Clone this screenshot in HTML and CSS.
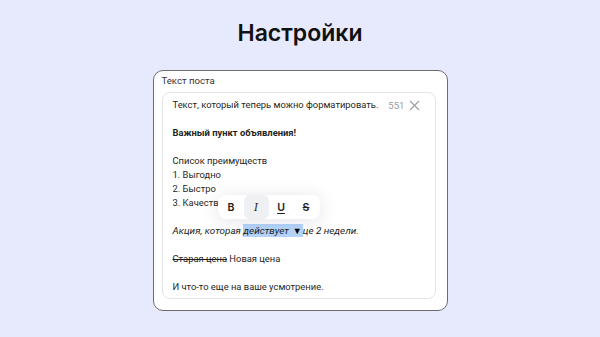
FILE: index.html
```html
<!DOCTYPE html>
<html lang="ru">
<head>
<meta charset="utf-8">
<link rel="stylesheet" href="styles.css">
</head>
<body>
<h1 class="title">Настройки</h1>
<div class="card">
  <div class="label">Текст поста</div>
  <div class="editor">
    <div class="head">
      <span class="line">Текст, который теперь можно форматировать.</span>
      <span class="count">551</span>
      <svg class="close" width="11" height="11" viewBox="0 0 11 11"><path d="M1 1L10 10M10 1L1 10" stroke="#9a9ca3" stroke-width="1.1" fill="none"/></svg>
    </div>
    <div class="gap"></div>
    <div class="line bold">Важный пункт объявления!</div>
    <div class="gap"></div>
    <div class="line">Список преимуществ</div>
    <div class="line">1. Выгодно</div>
    <div class="line">2. Быстро</div>
    <div class="line">3. Качество</div>
    <div class="gap"></div>
    <div class="line italic">Акция, которая <span class="sel">действует<span class="caret">▼</span></span>це 2 недели.</div>
    <div class="gap"></div>
    <div class="line"><s>Старая цена</s> Новая цена</div>
    <div class="gap"></div>
    <div class="line">И что-то еще на ваше усмотрение.</div>
    <div class="toolbar">
      <span class="btn b">B</span>
      <span class="btn i active">I</span>
      <span class="btn u">U</span>
      <span class="btn s">S</span>
    </div>
  </div>
</div>
</body>
</html>
```
FILE: styles.css
```css
html, body {
  margin: 0;
  padding: 0;
}
body {
  background: #e7eafd;
  font-family: Roboto, "Noto Sans", sans-serif;
  color: #1f1f22;
  width: 600px;
  height: 337px;
  overflow: hidden;
}
.title {
  margin: 0;
  padding-top: 18px;
  height: 35px;
  text-align: center;
  font-family: Inter, sans-serif;
  font-size: 23px;
  font-weight: 600;
  line-height: 30px;
  color: #111;
}
.card {
  box-sizing: border-box;
  width: 295px;
  margin: 17px auto 0;
  background: #fff;
  border: 1.5px solid #6d6d70;
  border-radius: 10px;
  padding: 3px 11px 11px 8px;
}
.label {
  font-size: 9.6px;
  line-height: 14px;
  color: #333;
  margin-bottom: 4px;
}
.editor {
  position: relative;
  border: 1px solid #e4e4e8;
  border-radius: 8px;
  padding: 5px 15px 4px 10px;
}
.head {
  display: flex;
  align-items: center;
}
.head .line {
  flex: 1;
}
.count {
  font-size: 9.6px;
  color: #9a9ca3;
  margin-right: 4px;
}
.close {
  display: block;
  flex-shrink: 0;
}
.line {
  font-size: 9.4px;
  line-height: 14px;
  white-space: nowrap;
}
.gap {
  height: 14px;
}
.bold {
  font-weight: 700;
}
.italic {
  font-style: italic;
  font-size: 9.9px;
}
.sel {
  background: #b5d4fb;
  padding: 1px 0;
}
.caret {
  font-style: normal;
  font-size: 9px;
  color: #000;
  margin-left: 4px;
  margin-right: 1px;
}
s {
  text-decoration-thickness: 1px;
}
.toolbar {
  position: absolute;
  left: 55px;
  top: 102px;
  display: flex;
  padding: 0 1px;
  background: #fff;
  border-radius: 8px;
  box-shadow: 0 2px 18px rgba(30, 40, 90, 0.13);
}
.btn {
  width: 25px;
  height: 24px;
  display: flex;
  align-items: center;
  justify-content: center;
  font-family: Inter, sans-serif;
  font-size: 10.5px;
  font-weight: 600;
  color: #222;
  border-radius: 6px;
}
.btn.active {
  background: #eff0f3;
}
.btn.i {
  font-style: italic;
  font-family: "DejaVu Serif", serif;
  font-weight: 400;
}
.btn.u {
  text-decoration: underline;
  text-underline-offset: 2px;
}
.btn.s {
  text-decoration: line-through;
}
```
